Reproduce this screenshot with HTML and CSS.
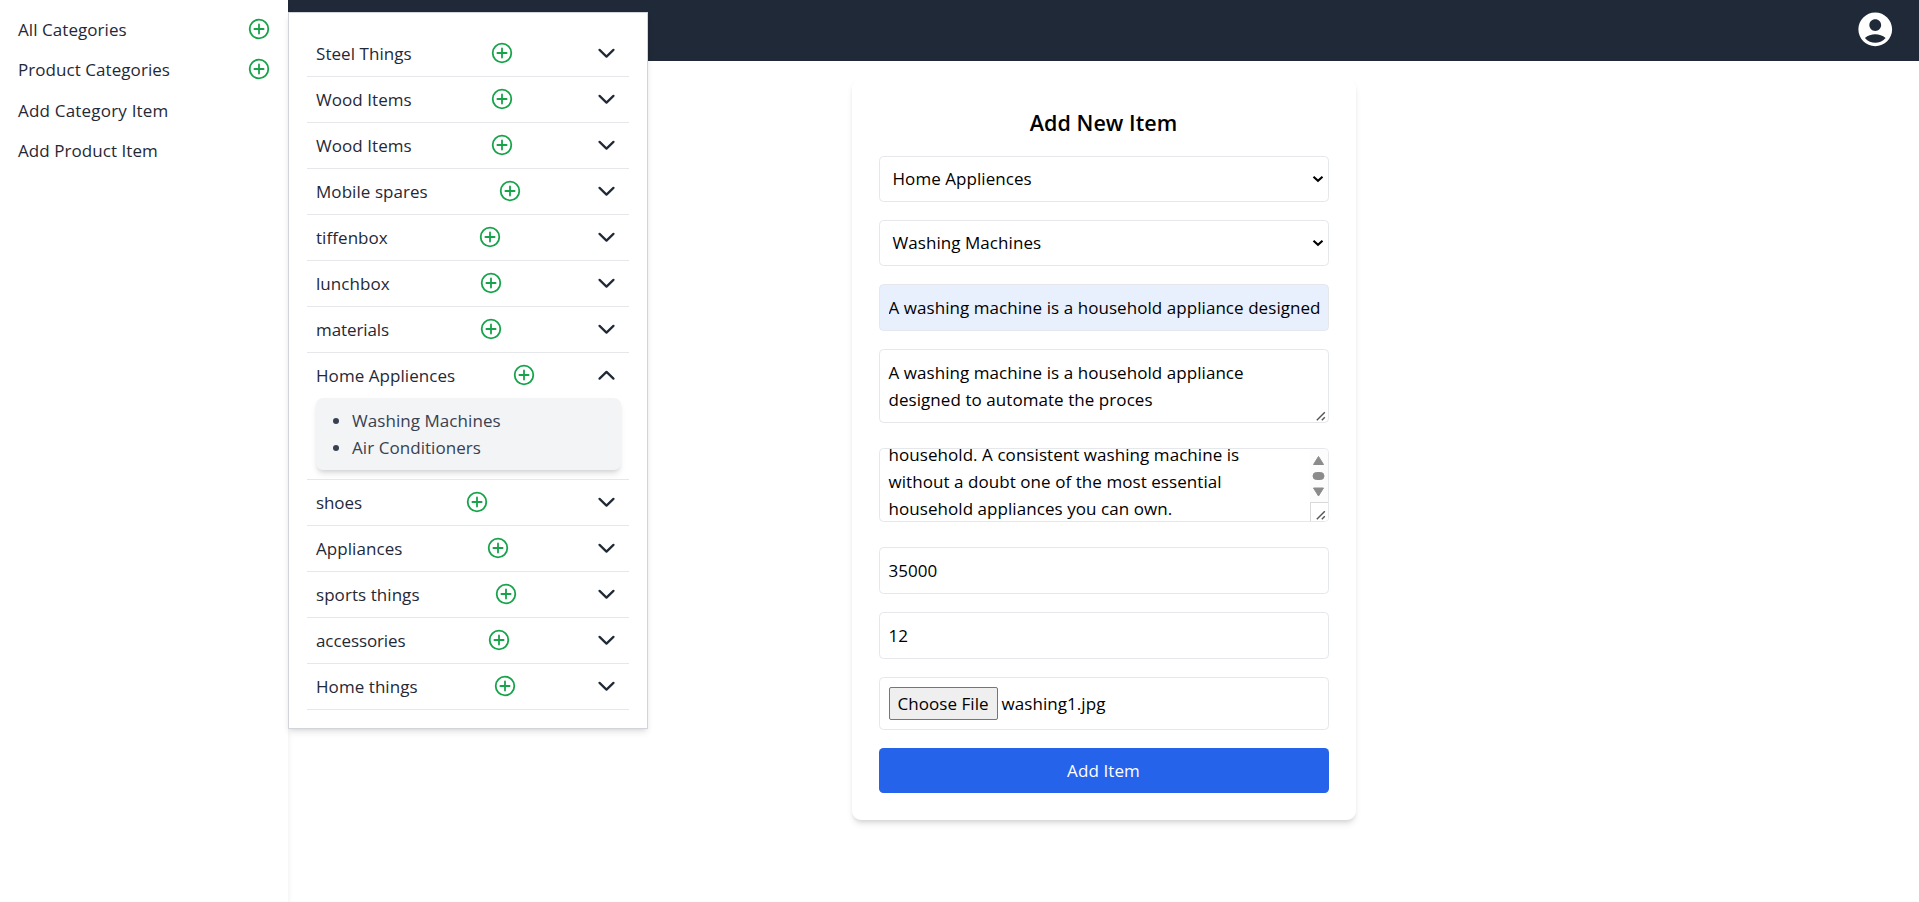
FILE: index.html
```html
<!DOCTYPE html>
<html lang="en">
<head>
<meta charset="utf-8">
<title>Add New Item</title>
<link rel="stylesheet" href="styles.css">
</head>
<body>
<svg class="defs" width="0" height="0">
  <symbol id="plus" viewBox="0 0 24 24"><circle cx="12" cy="12" r="9.3"/><path d="M12 7.4v9.2M7.4 12h9.2"/></symbol>
  <symbol id="down" viewBox="0 0 24 24"><path d="M5.800 8.800l6.200 6 6.200-6"/></symbol>
  <symbol id="up" viewBox="0 0 24 24"><path d="M5.800 14.800l6.200-6 6.200 6"/></symbol>
  <symbol id="caret" viewBox="0 0 12 8"><path d="M1.500 1.800L6 5.800l4.500-4"/></symbol>
  <symbol id="grip" viewBox="0 0 10 10"><path d="M.8 9.200l8-8M5.800 9.200l3-3"/></symbol>
</svg>
<div class="app">
  <aside class="sidebar">
    <a class="nav"><span>All Categories</span><svg class="plus"><use href="#plus"/></svg></a>
    <a class="nav"><span>Product Categories</span><svg class="plus"><use href="#plus"/></svg></a>
    <a class="nav wide"><span>Add Category Item</span></a>
    <a class="nav"><span>Add Product Item</span></a>
  </aside>
  <div class="main">
    <header class="topbar">
      <svg class="avatar" viewBox="0 0 24 24"><path d="M12 2C6.480 2 2 6.480 2 12s4.480 10 10 10 10-4.480 10-10S17.520 2 12 2zm0 4c1.930 0 3.500 1.570 3.500 3.500S13.930 13 12 13s-3.500-1.570-3.500-3.500S10.070 6 12 6zm0 14c-2.030 0-4.430-.820-6.140-2.880a9.947 9.947 0 0 1 12.280 0C16.430 19.180 14.030 20 12 20z"/></svg>
    </header>
    <form class="card">
      <h2>Add New Item</h2>
      <div class="field select"><span>Home Appliences</span><svg class="caret"><use href="#caret"/></svg></div>
      <div class="field select"><span>Washing Machines</span><svg class="caret"><use href="#caret"/></svg></div>
      <div class="field filled"><span class="clip">A washing machine is a household appliance designed</span></div>
      <div class="field area"><p>A washing machine is a household appliance<br>designed to automate the proces</p><svg class="grip"><use href="#grip"/></svg></div>
      <div class="field area scrolled"><p>household. A consistent washing machine is<br>without a doubt one of the most essential<br>household appliances you can own.</p>
        <div class="bar"><svg class="track" viewBox="0 0 17 53"><path d="M8.500 7.500L13.500 15.500H3.500z"/><rect x="3" y="23.500" width="11" height="7" rx="3.500"/><path d="M8.500 47L13.500 39H3.500z"/></svg><div class="corner"></div></div>
        <svg class="grip"><use href="#grip"/></svg></div>
      <div class="field"><span>35000</span></div>
      <div class="field"><span>12</span></div>
      <div class="field file"><span class="choose">Choose File</span><span class="name">washing1.jpg</span></div>
      <button type="button" class="submit">Add Item</button>
    </form>
  </div>
  <section class="menu">
    <div class="row"><span>Steel Things</span><svg class="plus"><use href="#plus"/></svg><svg class="chev"><use href="#down"/></svg></div>
    <div class="row"><span>Wood Items</span><svg class="plus"><use href="#plus"/></svg><svg class="chev"><use href="#down"/></svg></div>
    <div class="row"><span>Wood Items</span><svg class="plus"><use href="#plus"/></svg><svg class="chev"><use href="#down"/></svg></div>
    <div class="row"><span>Mobile spares</span><svg class="plus"><use href="#plus"/></svg><svg class="chev"><use href="#down"/></svg></div>
    <div class="row"><span>tiffenbox</span><svg class="plus"><use href="#plus"/></svg><svg class="chev"><use href="#down"/></svg></div>
    <div class="row"><span>lunchbox</span><svg class="plus"><use href="#plus"/></svg><svg class="chev"><use href="#down"/></svg></div>
    <div class="row tight"><span>materials</span><svg class="plus"><use href="#plus"/></svg><svg class="chev"><use href="#down"/></svg></div>
    <div class="row open"><span>Home Appliences</span><svg class="plus"><use href="#plus"/></svg><svg class="chev"><use href="#up"/></svg></div>
    <ul class="sub"><li><span>Washing Machines</span></li><li><span>Air Conditioners</span></li></ul>
    <div class="row first tight"><span>shoes</span><svg class="plus"><use href="#plus"/></svg><svg class="chev"><use href="#down"/></svg></div>
    <div class="row"><span>Appliances</span><svg class="plus"><use href="#plus"/></svg><svg class="chev"><use href="#down"/></svg></div>
    <div class="row"><span>sports things</span><svg class="plus"><use href="#plus"/></svg><svg class="chev"><use href="#down"/></svg></div>
    <div class="row tight"><span>accessories</span><svg class="plus"><use href="#plus"/></svg><svg class="chev"><use href="#down"/></svg></div>
    <div class="row"><span>Home things</span><svg class="plus"><use href="#plus"/></svg><svg class="chev"><use href="#down"/></svg></div>
  </section>
</div>
</body>
</html>
```
FILE: styles.css
```css
* { box-sizing: border-box; margin: 0; padding: 0; }
body { font: 17px/27px "Open Sans", "Noto Sans", sans-serif; letter-spacing: .06px; background: #fff; color: #1f2937; height: 902px; overflow: hidden; white-space: nowrap; }
.defs { display: block; position: absolute; }
.app { position: relative; display: flex; height: 902px; }
.sidebar { position: relative; width: 288px; padding: 15.600px 18px; display: flex; flex-direction: column; gap: 13.600px; box-shadow: 0 4.500px 6.750px -1px rgba(0,0,0,.1); }
.nav { display: flex; justify-content: space-between; align-items: center; height: 27px; }
.nav.wide { letter-spacing: .2px; }
.plus { width: 24px; height: 24px; fill: none; stroke: #16a34a; stroke-width: 1.8; stroke-linecap: round; flex: none; margin-bottom: 1px; }
.nav .plus { margin-right: -1px; }
.main { flex: 1; display: flex; flex-direction: column; align-items: center; }
.topbar { align-self: stretch; height: 61px; background: #1f2937; display: flex; justify-content: flex-end; padding: 9px 23.500px 0 0; }
.avatar { width: 40.500px; height: 40.500px; fill: #fff; }
.card { width: 504px; margin-top: 18px; padding: 27px; border-radius: 9px; background: #fff; color: #000; box-shadow: 0 4.500px 6.750px -1px rgba(0,0,0,.1), 0 2.250px 4.500px -2px rgba(0,0,0,.1); }
h2 { font-size: 21.500px; font-weight: 600; line-height: 31.500px; text-align: center; padding-top: 1px; margin-bottom: 17px; }
.field { position: relative; height: 47px; margin-bottom: 18px; padding: 9px 8px 9px 9px; border: 1px solid #e5e7eb; border-radius: 4.500px; display: flex; }
.select { height: 46px; padding: 9px 4px 9px 13px; justify-content: space-between; align-items: center; }
.caret { width: 12px; height: 8px; fill: none; stroke: #000; stroke-width: 2.100; }
.filled { background: #e8f0fe; }
.clip { overflow: hidden; flex: 1; }
.area { height: 74px; margin-bottom: 25px; overflow: hidden; }
.grip { position: absolute; right: 2px; bottom: 1px; width: 10px; height: 10px; stroke: #555; stroke-width: 1.400; fill: none; }
.scrolled { padding: 0 0 0 9px; justify-content: space-between; align-items: flex-end; }
.scrolled p { margin-bottom: -1px; }
.bar { width: 18px; height: 72px; background: #fcfcfc; display: flex; flex-direction: column; }
.track { width: 17px; height: 53px; fill: #8b8b8b; stroke: #8b8b8b; stroke-linejoin: round; align-self: center; }
.corner { flex: 1; border: 1px solid #d9d9d9; border-width: 1px 0 0 1px; background: #fff; }
.file { height: 53px; align-items: center; gap: 4px; }
.choose { height: 33px; width: 109px; line-height: 31px; text-align: center; border: 1px solid #767676; border-radius: 2px; background: #efefef; }
.submit { display: block; width: 100%; height: 45px; border: 0; border-radius: 4.500px; background: #2563eb; color: #fff; font: inherit; letter-spacing: .1px; }
.menu { position: absolute; left: 288px; top: 12px; width: 360px; height: 717px; padding: 18px; border: 1px solid #d1d5db; background: #fff; box-shadow: 0 4.500px 6.750px -1px rgba(0,0,0,.1), 0 2.250px 4.500px -2px rgba(0,0,0,.1); }
.row { height: 46px; padding: 0 9px; display: flex; justify-content: space-between; align-items: center; border-bottom: 1px solid #e5e7eb; }
.row.tight { letter-spacing: -.1px; }
.row.open { border-bottom: 0; height: 45px; }
.row.first { border-top: 1px solid #e5e7eb; height: 47px; }
.chev { width: 27px; height: 27px; fill: none; stroke: #1f2937; stroke-width: 2; stroke-linecap: round; stroke-linejoin: round; flex: none; }
.sub { height: 72px; margin: 0 8px 9px 9px; padding: 9px 0 9px 36px; border-radius: 7px; background: #f3f4f6; color: #374151; box-shadow: 0 4.500px 6.750px -1px rgba(0,0,0,.1), 0 2.250px 4.500px -2px rgba(0,0,0,.1); }
```
